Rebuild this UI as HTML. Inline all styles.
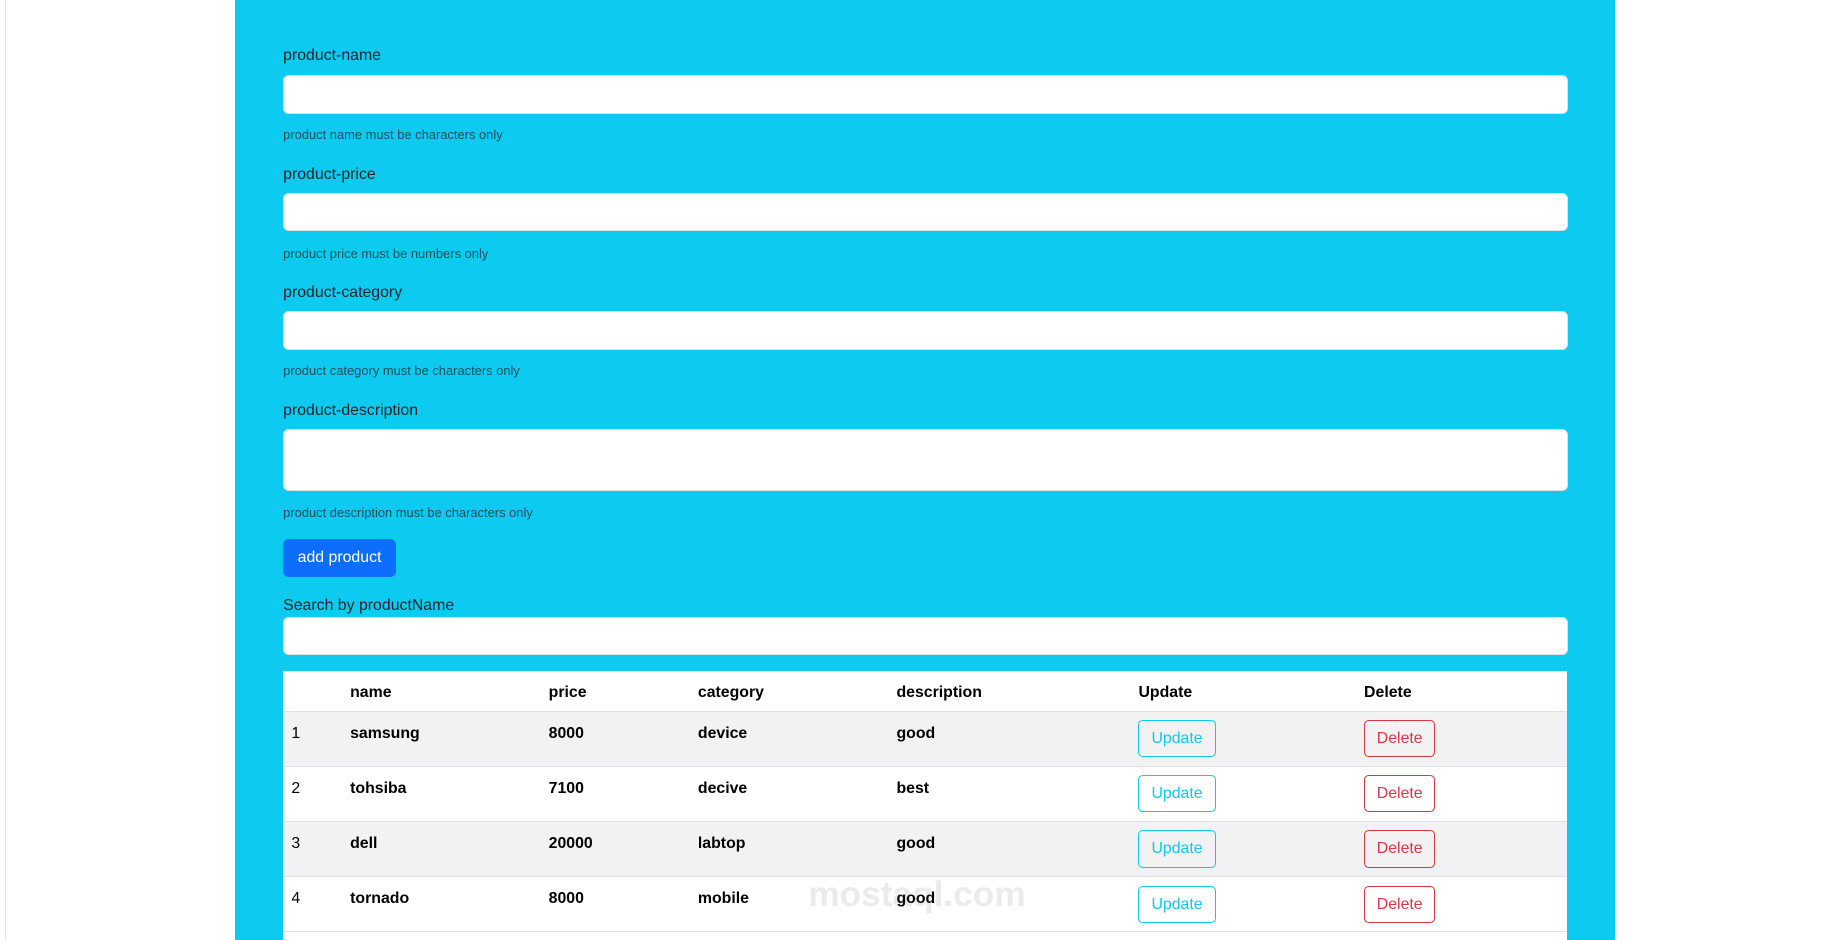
<!DOCTYPE html>
<html><head><meta charset="utf-8"><style>
html,body{margin:0;padding:0;background:#fff;overflow:hidden}
#w{zoom:1.1749;width:1568px;height:800px;position:relative;font-family:"Liberation Sans",sans-serif;color:#212529}
.card{position:absolute;left:4px;top:-10px;width:1580px;height:820px;border:1px solid #e3e3e3;border-radius:8px}
.panel{position:absolute;left:200px;top:0;width:1175px;height:810px;background:#0dcaf0}
.a{position:absolute}
.lbl{font-size:13.5px}
.help{font-size:11px;color:#1d4f5c}
.inp{background:#fff;border-radius:5px;border:1px solid #dee2e6;left:241px;width:1092px;height:31px}
.btn{background:#0d6efd;color:#fff;border-radius:5px;font-size:13.5px;text-align:center;line-height:32px}
.tbl{left:241px;top:571px;width:1093px;height:240px;background:#fff}
.row{position:absolute;left:0;width:1093px;height:46px;border-top:1px solid #dee2e6}
.t{position:absolute;font-size:13.5px;font-weight:bold;color:#000}
.ob{position:absolute;border-radius:4px;font-size:13.5px;text-align:center;line-height:30px;height:30px;background:transparent}
.u{border:1px solid #0dcaf0;color:#0dcaf0;width:64px}
.d{border:1px solid #dc3545;color:#dc3545;width:59px}
</style></head><body><div id="w">
<div class="card"></div>
<div class="panel"></div>
<div class="a lbl" style="left:241px;top:40px">product-name</div>
<div class="a inp" style="top:64px"></div>
<div class="a help" style="left:241px;top:108px">product name must be characters only</div>
<div class="a lbl" style="left:241px;top:141px">product-price</div>
<div class="a inp" style="top:164px"></div>
<div class="a help" style="left:241px;top:209px">product price must be numbers only</div>
<div class="a lbl" style="left:241px;top:242px">product-category</div>
<div class="a inp" style="top:265px"></div>
<div class="a help" style="left:241px;top:309px">product category must be characters only</div>
<div class="a lbl" style="left:241px;top:342px">product-description</div>
<div class="a inp" style="top:365px;height:51px"></div>
<div class="a help" style="left:241px;top:430px">product description must be characters only</div>
<div class="a btn" style="left:241px;top:459px;width:96px;height:32px">add product</div>
<div class="a lbl" style="left:241px;top:508px">Search by productName</div>
<div class="a inp" style="top:525px"></div>
<div class="a tbl">
 <div class="t" style="left:57px;top:11px">name</div><div class="t" style="left:226px;top:11px">price</div><div class="t" style="left:353px;top:11px">category</div><div class="t" style="left:522px;top:11px">description</div><div class="t" style="left:728px;top:11px">Update</div><div class="t" style="left:920px;top:11px">Delete</div>
 <div class="row" style="top:34px;background:#f2f2f2"><div class="t" style="left:7px;top:11px;font-weight:normal">1</div><div class="t" style="left:57px;top:11px">samsung</div><div class="t" style="left:226px;top:11px">8000</div><div class="t" style="left:353px;top:11px">device</div><div class="t" style="left:522px;top:11px">good</div><div class="ob u" style="left:728px;top:7px">Update</div><div class="ob d" style="left:920px;top:7px">Delete</div></div>
 <div class="row" style="top:81px"><div class="t" style="left:7px;top:11px;font-weight:normal">2</div><div class="t" style="left:57px;top:11px">tohsiba</div><div class="t" style="left:226px;top:11px">7100</div><div class="t" style="left:353px;top:11px">decive</div><div class="t" style="left:522px;top:11px">best</div><div class="ob u" style="left:728px;top:7px">Update</div><div class="ob d" style="left:920px;top:7px">Delete</div></div>
 <div class="row" style="top:128px;background:#f2f2f2"><div class="t" style="left:7px;top:11px;font-weight:normal">3</div><div class="t" style="left:57px;top:11px">dell</div><div class="t" style="left:226px;top:11px">20000</div><div class="t" style="left:353px;top:11px">labtop</div><div class="t" style="left:522px;top:11px">good</div><div class="ob u" style="left:728px;top:7px">Update</div><div class="ob d" style="left:920px;top:7px">Delete</div></div>
 <div class="row" style="top:175px;border-bottom:1px solid #dee2e6"><div class="t" style="left:7px;top:11px;font-weight:normal">4</div><div class="t" style="left:57px;top:11px">tornado</div><div class="t" style="left:226px;top:11px">8000</div><div class="t" style="left:353px;top:11px">mobile</div><div class="t" style="left:522px;top:11px">good</div><div class="ob u" style="left:728px;top:7px">Update</div><div class="ob d" style="left:920px;top:7px">Delete</div></div>
</div>
<div class="a" style="left:688px;top:745px;font-size:30px;font-weight:bold;color:rgba(120,120,120,0.15)">mostaql.com</div>
</div></body></html>
